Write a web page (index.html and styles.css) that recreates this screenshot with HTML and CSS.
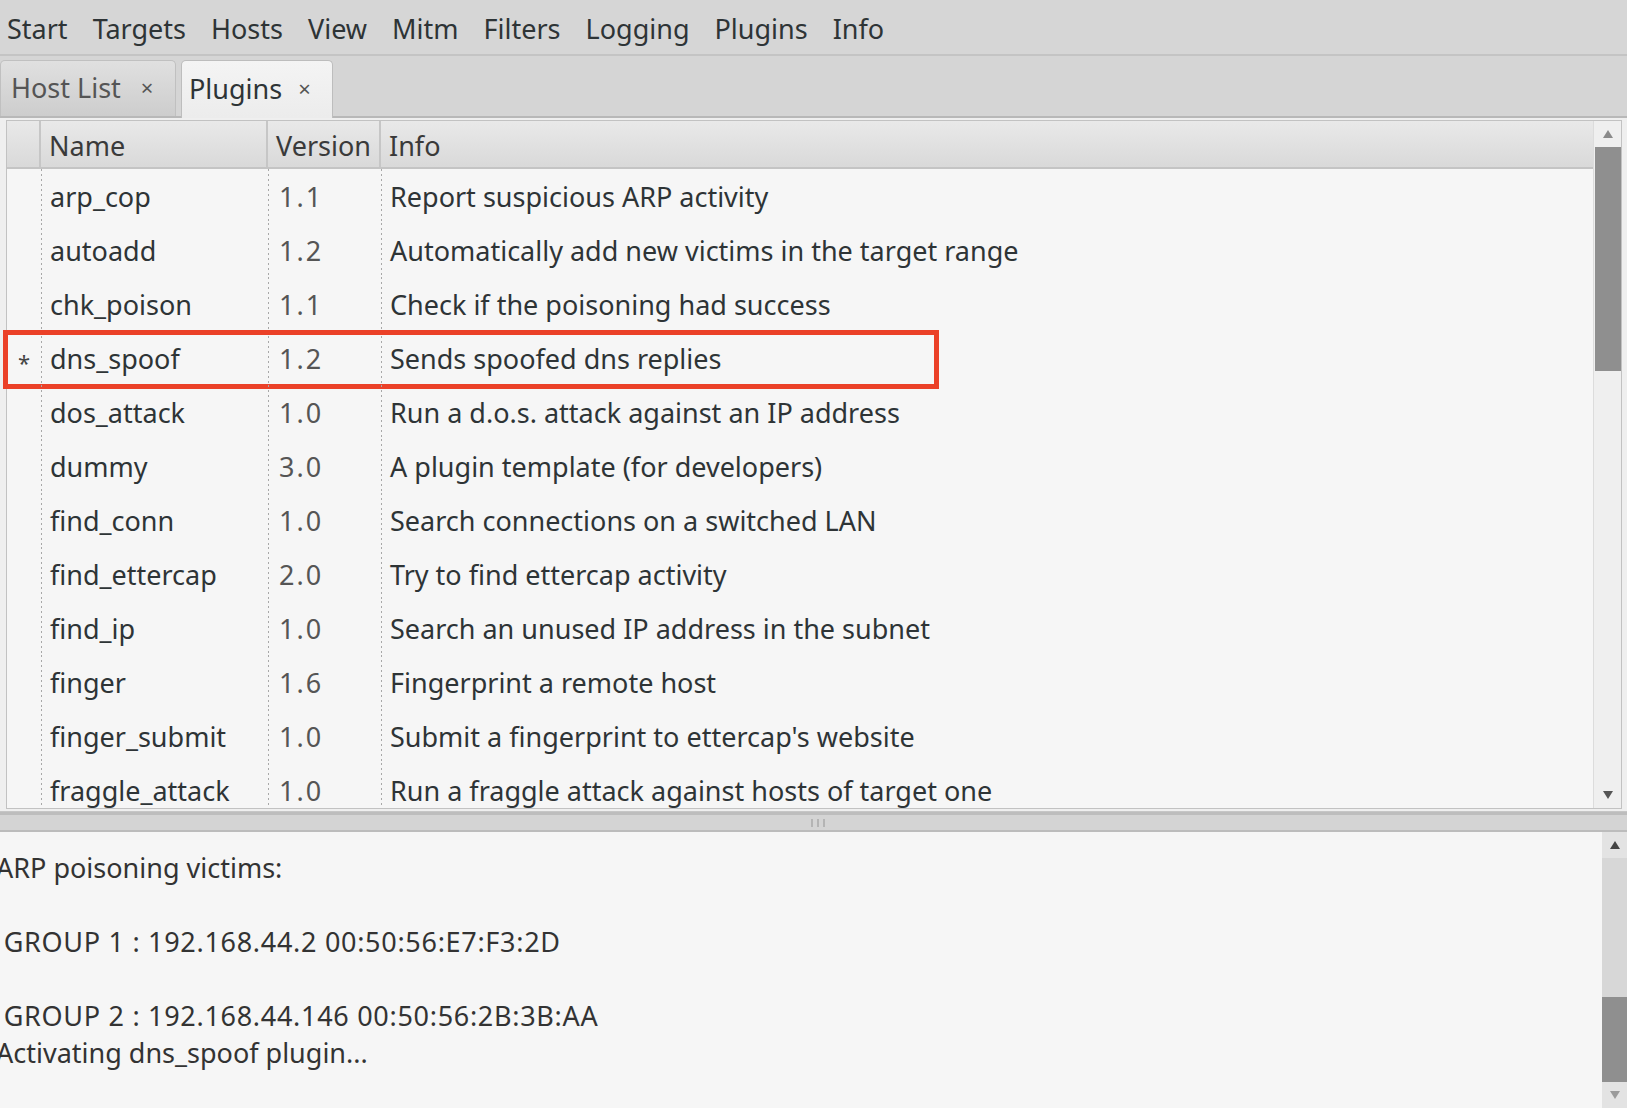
FILE: index.html
```html
<!DOCTYPE html>
<html>
<head>
<meta charset="utf-8">
<link rel="stylesheet" href="styles.css">
</head>
<body>
<div class="app">
  <nav class="menubar">
    <span class="menu-item">Start</span>
    <span class="menu-item">Targets</span>
    <span class="menu-item">Hosts</span>
    <span class="menu-item">View</span>
    <span class="menu-item">Mitm</span>
    <span class="menu-item">Filters</span>
    <span class="menu-item">Logging</span>
    <span class="menu-item">Plugins</span>
    <span class="menu-item">Info</span>
  </nav>
  <div class="tabbar">
    <div class="tab">Host List <span class="close">×</span></div>
    <div class="tab active">Plugins <span class="close">×</span></div>
  </div>
  <div class="notebook">
    <div class="frame">
      <div class="table">
        <div class="thead">
          <div class="th gutter"></div>
          <div class="th c-name">Name</div>
          <div class="th c-ver">Version</div>
          <div class="th c-info">Info</div>
        </div>
        <div class="tbody">
          <div class="tr"><div class="td gutter"></div><div class="td c-name">arp_cop</div><div class="td c-ver">1.1</div><div class="td c-info">Report suspicious ARP activity</div></div>
          <div class="tr"><div class="td gutter"></div><div class="td c-name">autoadd</div><div class="td c-ver">1.2</div><div class="td c-info">Automatically add new victims in the target range</div></div>
          <div class="tr"><div class="td gutter"></div><div class="td c-name">chk_poison</div><div class="td c-ver">1.1</div><div class="td c-info">Check if the poisoning had success</div></div>
          <div class="tr marked"><div class="td gutter">*</div><div class="td c-name">dns_spoof</div><div class="td c-ver">1.2</div><div class="td c-info">Sends spoofed dns replies</div><div class="highlight"></div></div>
          <div class="tr"><div class="td gutter"></div><div class="td c-name">dos_attack</div><div class="td c-ver">1.0</div><div class="td c-info">Run a d.o.s. attack against an IP address</div></div>
          <div class="tr"><div class="td gutter"></div><div class="td c-name">dummy</div><div class="td c-ver">3.0</div><div class="td c-info">A plugin template (for developers)</div></div>
          <div class="tr"><div class="td gutter"></div><div class="td c-name">find_conn</div><div class="td c-ver">1.0</div><div class="td c-info">Search connections on a switched LAN</div></div>
          <div class="tr"><div class="td gutter"></div><div class="td c-name">find_ettercap</div><div class="td c-ver">2.0</div><div class="td c-info">Try to find ettercap activity</div></div>
          <div class="tr"><div class="td gutter"></div><div class="td c-name">find_ip</div><div class="td c-ver">1.0</div><div class="td c-info">Search an unused IP address in the subnet</div></div>
          <div class="tr"><div class="td gutter"></div><div class="td c-name">finger</div><div class="td c-ver">1.6</div><div class="td c-info">Fingerprint a remote host</div></div>
          <div class="tr"><div class="td gutter"></div><div class="td c-name">finger_submit</div><div class="td c-ver">1.0</div><div class="td c-info">Submit a fingerprint to ettercap's website</div></div>
          <div class="tr"><div class="td gutter"></div><div class="td c-name">fraggle_attack</div><div class="td c-ver">1.0</div><div class="td c-info">Run a fraggle attack against hosts of target one</div></div>
        </div>
      </div>
      <div class="vscroll">
        <div class="arrow up"><svg width="12" height="10" viewBox="0 0 12 10"><path d="M6 1 L11 9 L1 9 Z" fill="#8a8a8a"/></svg></div>
        <div class="track"><div class="thumb"></div></div>
        <div class="arrow down"><svg width="12" height="10" viewBox="0 0 12 10"><path d="M1 1 L11 1 L6 9 Z" fill="#555"/></svg></div>
      </div>
    </div>
  </div>
  <div class="splitter"><span class="grip"></span><span class="grip"></span><span class="grip"></span></div>
  <div class="logpane">
    <div class="log">
      <div class="line">ARP poisoning victims:</div>
      <div class="line"> </div>
      <div class="line num"> GROUP 1 : 192.168.44.2 00:50:56:E7:F3:2D</div>
      <div class="line"> </div>
      <div class="line num"> GROUP 2 : 192.168.44.146 00:50:56:2B:3B:AA</div>
      <div class="line">Activating dns_spoof plugin...</div>
    </div>
    <div class="logscroll">
      <div class="arrow up2"><svg width="12" height="10" viewBox="0 0 12 10"><path d="M6 1 L11 9 L1 9 Z" fill="#444"/></svg></div>
      <div class="track2"><div class="thumb2"></div></div>
      <div class="arrow down2"><svg width="12" height="10" viewBox="0 0 12 10"><path d="M1 1 L11 1 L6 9 Z" fill="#9a9a9a"/></svg></div>
    </div>
  </div>
</div>
</body>
</html>
```
FILE: styles.css
```css
* { box-sizing: border-box; }
html, body { margin: 0; padding: 0; }
body {
  width: 1627px;
  height: 1108px;
  overflow: hidden;
  background: #d5d5d5;
  font-family: "Noto Sans", "Open Sans", sans-serif;
  color: #2e3436;
}
.app { display: flex; flex-direction: column; height: 1108px; }

.menubar {
  height: 56px;
  display: flex;
  align-items: center;
  background: #d6d6d6;
  border-bottom: 2px solid #c4c4c4;
  font-size: 27px;
  flex: none;
}
.menu-item { padding: 2px 13px 0 7px; margin-right: 5px; }

.tabbar {
  height: 62px;
  display: flex;
  align-items: flex-end;
  gap: 5px;
  flex: none;
  background: #d5d5d5;
  border-bottom: 2px solid #b8b8b8;
}
.tab {
  height: 56px;
  padding: 0 16px 3px 10px;
  display: flex;
  align-items: center;
  font-size: 27px;
  color: #555;
  background: linear-gradient(#e0e0e0, #cdcdcd);
  border: 1px solid #c0c0c0;
  border-bottom: none;
  border-radius: 5px 5px 0 0;
  width: 176px;
}
.tab.active {
  color: #2e3436;
  background: linear-gradient(#f4f4f4, #ececec);
  border-color: #bdbdbd;
  width: 152px;
  height: 58px;
  margin-bottom: -2px;
  padding-left: 7px;
}
.close { font-size: 22px; margin-left: 20px; color: #555; }
.tab.active .close { margin-left: 16px; }

.notebook {
  flex: none;
  height: 694px;
  padding: 2px 5px 2px 6px;
  background: #efefef;
  border-bottom: 1px solid #c6c6c6;
}
.frame {
  height: 100%;
  display: flex;
  border: 1px solid #c2c2c2;
  background: #f6f6f6;
}
.table {
  flex: 1;
  font-size: 27px;
  overflow-x: visible;
  overflow-y: clip;
  min-width: 0;
}
.thead {
  height: 48px;
  display: flex;
  background: linear-gradient(#e9e9e9, #d9d9d9);
  border-bottom: 2px solid #c4c4c4;
}
.th {
  display: flex;
  align-items: center;
  padding-left: 8px;
  padding-top: 2px;
  border-right: 2px solid #c6c6c6;
  color: #3a3a3a;
}
.th.c-info { border-right: none; }
.gutter { width: 34px; flex: none; }
.c-name { width: 227px; flex: none; }
.c-ver { width: 113px; flex: none; }
.c-info { flex: 1; }
.th.gutter { padding: 0; }

.tr {
  height: 54px;
  display: flex;
  position: relative;
}
.td {
  display: flex;
  align-items: center;
  padding-left: 9px;
  white-space: nowrap;
}
.td.c-name, .td.c-ver, .td.c-info {
  background: linear-gradient(#a8a8a8 50%, transparent 50%) left top / 1px 5px repeat-y;
}
.td.c-ver { padding-left: 11px; color: #555; letter-spacing: 2px; }
.td.c-info { padding-left: 9px; }
.td.gutter { justify-content: center; padding-left: 0; padding-top: 8px; font-size: 22px; color: #444; }
.highlight {
  position: absolute;
  left: -4px;
  top: -1px;
  width: 936px;
  height: 59px;
  border: 5px solid #eb4128;
  pointer-events: none;
}

.vscroll {
  width: 28px;
  flex: none;
  display: flex;
  flex-direction: column;
  background: #efefef;
  border-left: 1px solid #dcdcdc;
}
.arrow { height: 26px; flex: none; display: flex; align-items: center; justify-content: center; }
.track { flex: 1; }
.thumb { height: 224px; background: #8f8f8f; margin: 0 0 0 1px; }

.splitter {
  flex: none;
  height: 20px;
  background: #d4d4d4;
  border-top: 3px solid #bdbdbd;
  border-bottom: 2px solid #bcbcbc;
  display: flex;
  justify-content: center;
  align-items: center;
  gap: 4px;
  padding-left: 8px;
}
.grip { width: 2px; height: 8px; background: #b4b4b4; }

.logpane { flex: 1; display: flex; background: #f6f6f6; min-height: 0; }
.log {
  flex: 1;
  padding-top: 17px;
  margin-left: -4px;
  font-size: 27px;
  line-height: 37px;
  color: #333;
  overflow: hidden;
}
.line { white-space: pre; height: 37px; }
.line.num { letter-spacing: 0.7px; }
.logscroll {
  width: 25px;
  flex: none;
  display: flex;
  flex-direction: column;
  background: #d7d7d7;
}
.up2 { background: #e3e3e3; }
.track2 { flex: 1; display: flex; flex-direction: column; justify-content: flex-end; }
.thumb2 { height: 85px; background: #8f8f8f; }
.down2 { background: #e3e3e3; }
```
